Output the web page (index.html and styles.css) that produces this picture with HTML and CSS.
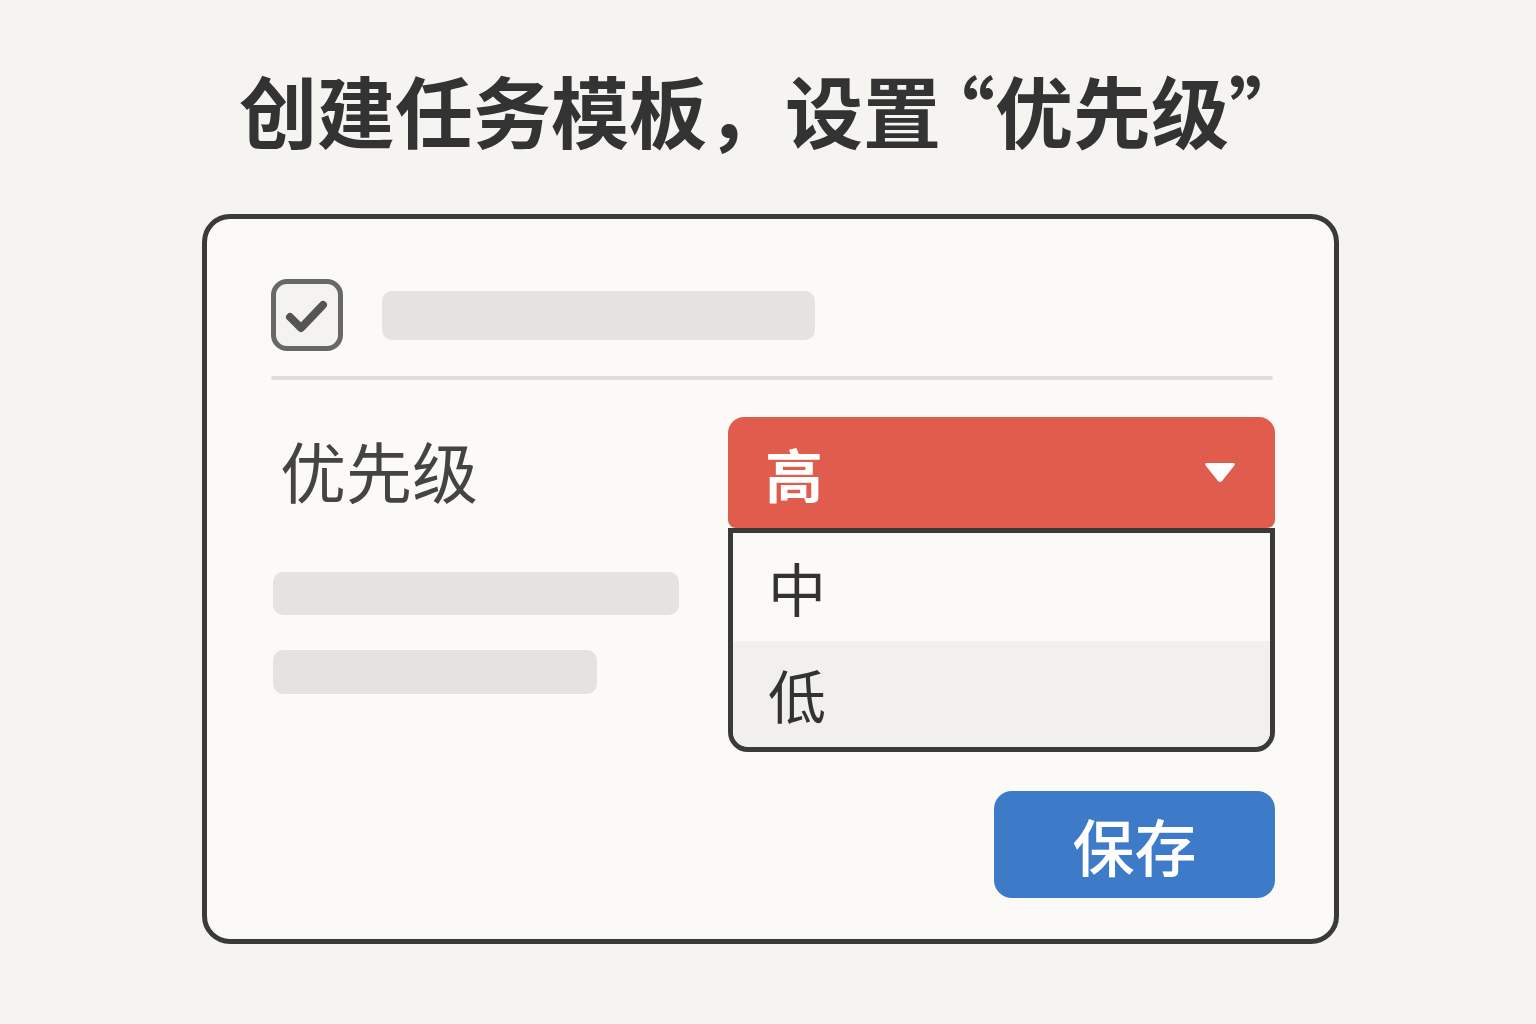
FILE: index.html
```html
<!DOCTYPE html>
<html lang="zh-CN">
<head>
    <meta charset="utf-8">
    <title>创建任务模板</title>
    <link rel="stylesheet" href="styles.css">
</head>
<body>

<h1 class="title">创建任务模板，设<span class="tight">置</span>“优先级”</h1>

<div class="card">
    <div class="task-row">
        <div class="checkbox">
            <svg width="62" height="62" viewBox="0 0 62 62">
                <path d="M14 33 L25 44 L47 21" fill="none" stroke="#555" stroke-width="8" stroke-linecap="round" stroke-linejoin="round"/>
            </svg>
        </div>
        <div class="bar bar-title"></div>
    </div>

    <div class="divider"></div>

    <div class="priority">
        <div class="left-col">
            <div class="label">优先级</div>
            <div class="bar bar-long"></div>
            <div class="bar bar-short"></div>
        </div>

        <div class="dropdown">
            <div class="dropdown-head">
                <span>高</span>
                <svg class="caret" width="34" height="23" viewBox="0 0 34 23">
                    <path d="M4 2 H30 Q33 2 31 5 L19 20 Q17 22 15 20 L3 5 Q1 2 4 2 Z" fill="#fff"/>
                </svg>
            </div>
            <div class="dropdown-list">
                <div class="option">中</div>
                <div class="option option-hover">低</div>
            </div>
        </div>
    </div>

    <div class="actions">
        <button class="save">保存</button>
    </div>
</div>

</body>
</html>
```

FILE: styles.css
```css
body {
    margin: 0;
    padding: 70px 0 0;
    background-color: #f6f4f0;
    font-family: "Noto Sans CJK SC", "Noto Sans", sans-serif;
    color: #333;
    display: flex;
    flex-direction: column;
    align-items: center;
}
.title {
    margin: 0;
    padding-left: 10px;
    font-size: 78px;
    line-height: 1;
    font-weight: 700;
    color: #333;
}
.tight {
    letter-spacing: -24px;
}
.card {
    margin-top: 66px;
    margin-left: 5px;
    width: 1137px;
    height: 730px;
    box-sizing: border-box;
    border: 5px solid #3a3a3a;
    border-radius: 28px;
    background-color: #fcfaf7;
    padding: 60px 59px 0 64px;
}
.task-row {
    display: flex;
    align-items: center;
    gap: 39px;
}
.checkbox {
    width: 72px;
    height: 72px;
    box-sizing: border-box;
    border: 5px solid #686868;
    border-radius: 16px;
    background-color: #f4f3f0;
    display: flex;
    align-items: center;
    justify-content: center;
}
.bar {
    background-color: #e4e3e0;
    border-radius: 10px;
}
.bar-title {
    width: 433px;
    height: 49px;
}
.divider {
    margin-top: 25px;
    height: 4px;
    background-color: #dfddd9;
    border-radius: 2px;
    margin-right: 2px;
}
.priority {
    margin-top: 37px;
    display: flex;
    justify-content: space-between;
}
.left-col {
    padding-left: 2px;
}
.label {
    margin-top: 19px;
    padding-left: 7px;
    font-size: 66px;
    line-height: 1;
    color: #444;
}
.bar-long {
    margin-top: 70px;
    width: 406px;
    height: 43px;
}
.bar-short {
    margin-top: 35px;
    width: 324px;
    height: 44px;
}
.dropdown {
    width: 547px;
}
.dropdown-head {
    position: relative;
    z-index: 1;
    height: 111px;
    box-sizing: border-box;
    padding: 0 38px 0 37px;
    background-color: #e05c4c;
    border-radius: 16px 16px 8px 8px;
    display: flex;
    align-items: center;
    justify-content: space-between;
    color: #fff;
    font-size: 58px;
    font-weight: 700;
    line-height: 1;
}
.dropdown-list {
    border: 5px solid #3a3a3a;
    border-radius: 0 0 20px 20px;
    overflow: hidden;
    background-color: #fcfaf7;
}
.option {
    height: 108px;
    padding-left: 35px;
    display: flex;
    align-items: center;
    font-size: 58px;
    line-height: 1;
    color: #333;
}
.option-hover {
    height: 106px;
    background-color: #f1f0ed;
}
.actions {
    margin-top: 39px;
    display: flex;
    justify-content: flex-end;
}
.save {
    width: 281px;
    height: 107px;
    border: none;
    border-radius: 18px;
    background-color: #3d7bc9;
    color: #fff;
    font-family: "Noto Sans CJK SC", "Noto Sans", sans-serif;
    font-size: 62px;
    font-weight: 500;
    line-height: 1;
    padding: 0;
    cursor: pointer;
}
```
